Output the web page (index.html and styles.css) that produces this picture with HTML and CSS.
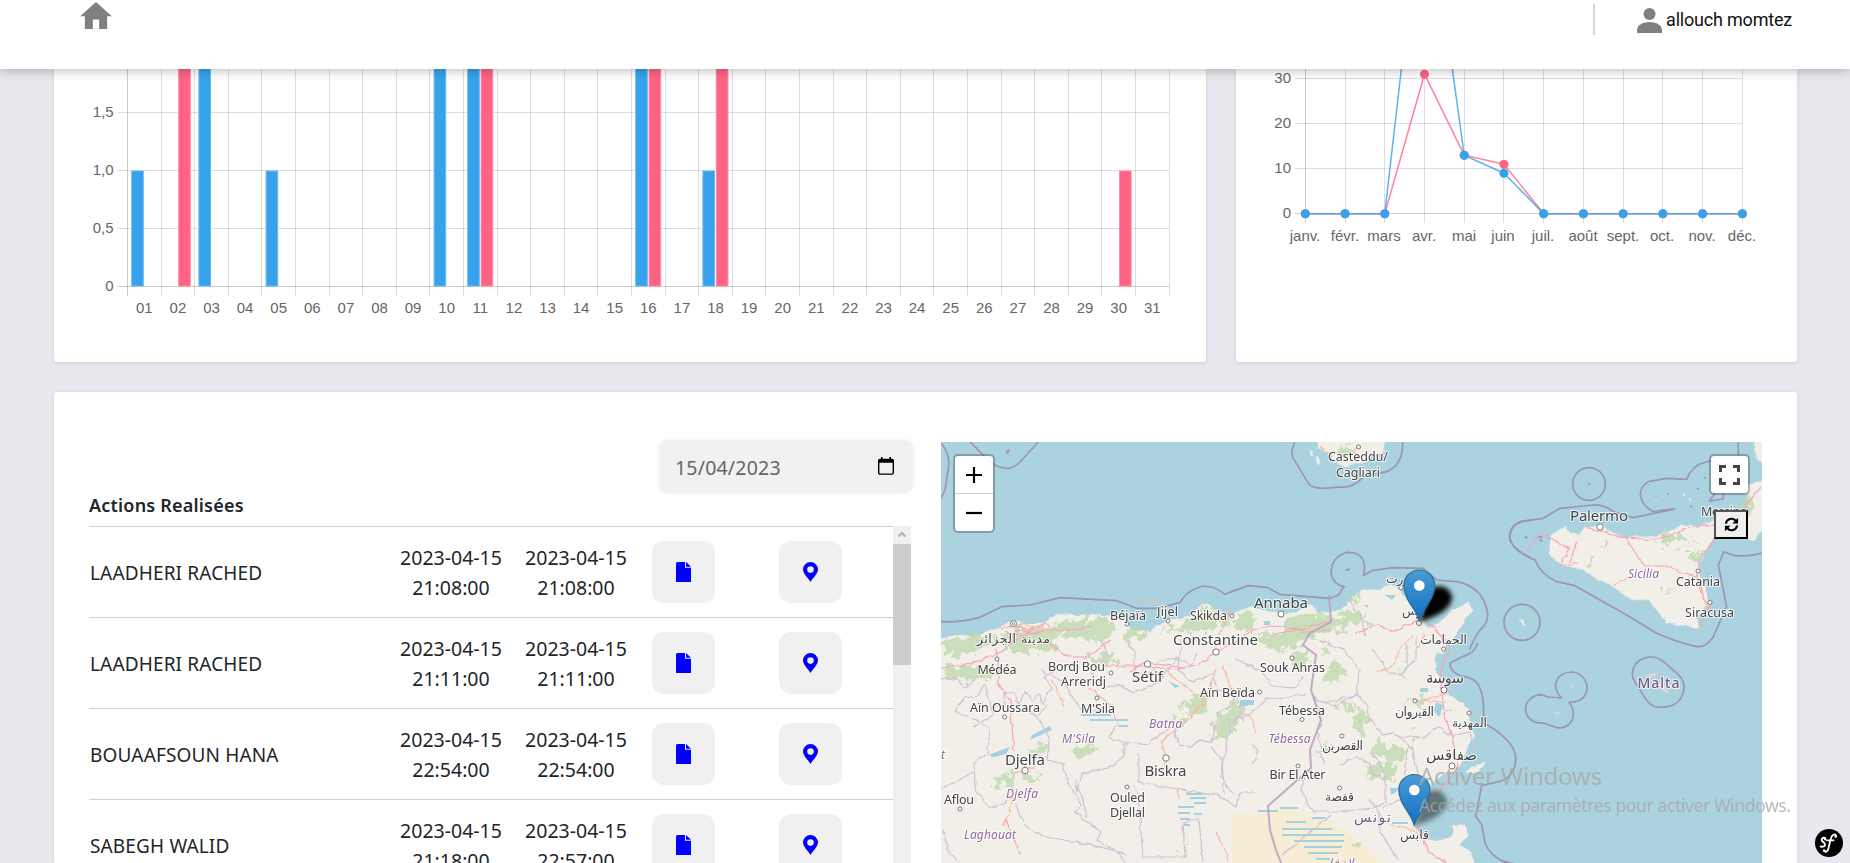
FILE: index.html
```html
<!DOCTYPE html>
<html lang="fr">
<head>
<meta charset="utf-8">
<title>Tableau de bord</title>
<link rel="stylesheet" href="styles.css">
</head>
<body>
<header class="topbar">
  <svg class="home" viewBox="2 3 20 17"><path d="M10 20v-6h4v6h5v-8h3L12 3 2 12h3v8z"/></svg>
  <div class="user">
    <svg class="avatar" viewBox="0 0 25 25"><circle cx="12.500" cy="6" r="6"/><path d="M0 25v-2.500C0 17.500 5 14 12.500 14S25 17.500 25 22.500V25z"/></svg>
    <span>allouch momtez</span>
  </div>
</header>

<main class="page">
  <div class="charts">
    <section class="card"><svg class="chart" id="days" viewBox="54 69 1152 293"></svg></section>
    <section class="card"><svg class="chart" id="months" viewBox="1236 69 561 293"></svg></section>
  </div>

  <section class="card lower">
    <div class="actions">
      <div class="date"><span>15/04/2023</span>
        <svg class="cal" viewBox="0 0 16 18"><path d="M2 2.500h12a1.300 1.300 0 0 1 1.300 1.300v12a1.300 1.300 0 0 1-1.300 1.300H2A1.300 1.300 0 0 1 .7 15.800v-12A1.300 1.300 0 0 1 2 2.500z" fill="none" stroke="#000" stroke-width="1.400"/><path d="M.7 2.500h14.600v3.300H.7zM3 0h1.600v3H3zM11.400 0H13v3h-1.600z"/></svg>
      </div>
      <h2>Actions Realisées</h2>
      <div class="scroller">
        <div class="rows" id="rows"></div>
        <div class="track"><svg class="up" viewBox="0 0 18 18"><path d="M5.500 10.500 9 7l3.500 3.500" fill="none" stroke="#b0b0b0" stroke-width="2"/></svg><div class="thumb"></div></div>
      </div>
    </div>

    <div class="map">
      <svg class="tiles" viewBox="941 442 821 421">
        <defs>
          <filter id="rough" x="-5%" y="-5%" width="110%" height="110%"><feTurbulence type="fractalNoise" baseFrequency=".12" numOctaves="2" seed="4"/><feDisplacementMap in="SourceGraphic" scale="5" xChannelSelector="R" yChannelSelector="G"/></filter>
          <filter id="patchy" x="-5%" y="-5%" width="110%" height="110%"><feTurbulence type="fractalNoise" baseFrequency=".13" numOctaves="3" seed="9"/><feDisplacementMap in="SourceGraphic" scale="22" xChannelSelector="R" yChannelSelector="G"/></filter>
          <filter id="soft" x="-50%" y="-50%" width="200%" height="200%"><feGaussianBlur stdDeviation="2.500"/></filter>
          <linearGradient id="pin" x2="0" y2="1"><stop offset="0" stop-color="#4a9bd2"/><stop offset="1" stop-color="#126fc6"/></linearGradient>
          <g id="marker"><path d="M0 0C-3-12-15.500-22-15.500-35.500a15.500 15.500 0 0 1 31 0C15.500-22 3-12 0 0z" fill="url(#pin)" stroke="#2e6c97" stroke-width="1.200"/><circle cy="-35.500" r="5.300" fill="#fff"/></g>
        </defs>
        <rect class="sea" x="941" y="442" width="821" height="421"/>

        <g class="land" filter="url(#rough)">
          <path transform="translate(930 430) scale(.33333)" d="M15 627 60 622 100 612 140 618 175 605 215 590 240 572 290 580 340 578 380 552 430 555 500 553 560 558 590 575 600 592 625 602 660 605 680 590 700 575 740 565 780 560 800 535 830 515 850 535 880 550 905 560 925 545 970 528V670H15z"/>
          <path transform="translate(1230 430) scale(.33333)" d="M0 570 20 545 60 530 100 540 150 545 195 550 240 525 270 545 300 545 340 535 370 500 400 475 450 480 480 462 510 478 520 495 540 520 570 575 600 590 630 580 640 560 670 540 700 525 715 515 727 540 700 580 680 610 650 640 640 670H0zM265 20 260 55 280 62 300 70 305 95 350 110 390 100 430 80 460 66 466 20zM258 80 270 90 268 102 260 98zM235 60l12 2 2 14-8-2z"/>
          <path transform="translate(1500 430) scale(.33333)" d="M148 345 155 315 195 285 205 305 235 312 255 295 300 285 335 305 375 322 470 318 540 288 570 285 600 290 650 270 640 330 610 370 595 420 605 450 620 490 625 520 590 560 600 600 570 590 500 580 470 540 440 510 390 510 340 470 280 440 250 420 185 405 150 375zM760 20 770 85 800 115V20zM800 145 745 165 740 200 745 250 730 270 740 300 735 325 765 330 800 280zM57 567l12 5 8 15-12-2zM565 203l9 6-4 8zM548 190l9 5-6 5z"/>
          <path d="M925 640h330v240H925z"/>
          <path transform="translate(1230 643) scale(.33333)" d="M0-10H640L620 30 615 80 640 110 650 150 665 165 700 180 715 200 720 250 735 275 720 300 705 335 690 370 660 390 620 405 600 430 570 460 560 500 550 545 590 590 640 590 665 575 670 545 705 545 715 575 690 600 700 610 725 630 735 690H0zM705 390l55-38v20l-22 15z"/>
          <path class="pinkish" transform="translate(1500 643) scale(.33333)" d="M440 92l22 0 5 12-15-2zM470 120l22 5 14 20-15 4zM155 205l22 2-2 7zM210 130h9v5h-9z"/>
        </g>

        <g class="desert"><path d="M1233 812 1263 815 1280 806 1312 816 1345 830 1362 843 1382 863H1233L1231 830z"/></g>

        <g class="green" filter="url(#patchy)">
          <path d="M943 642 980 634 1000 640 975 652 943 655zM943 668l30-4 30 6-20 12-38-4zM1000 636l40-10 22 4-10 20-40 4zM1054 622l45-4 20 10-15 14-40-6zM1088 655l25-2 5 10-25 2zM1125 628l24 2-6 10-18-2zM1200 610l8-6 8 10-10 8zM1160 632l26-10 30-8 15 8-25 8zM1238 612l18 4-4 14-16-2zM1285 622l22-10 30 4 6 12-30 10-28 14zM1332 618l24-10 8 8-18 14zM1350 596l12-3-6 12zM1258 636l30-4 8 10-26 8z"/>
          <path d="M1215 722l20-20 10 8-12 22-20 12zM1180 700l24-2 4 12-18 4zM1168 720l22-4-4 10zM1070 748l26-2-2 8-22 4zM1030 752l14-10 4 6-16 12zM992 780l24-8-4 16-18-3zM1022 772l20 4-14 6zM1320 670l18-6 10 10-20 10zM1358 706l12 14-8 18-10-14zM1412 735l9-3-4 12zM1375 740l30 10-4 12-28-6zM1365 765l30-4-4 20-24-6zM1404 700l24-4-4 10zM1400 665l10 6-8 8zM1290 655l16-6 6 10-18 8zM1330 706l26-4-4 8zM1310 750l22-4-4 6zM1350 845l10-3-2 10zM1180 845l3 12h-4zM1470 860l4-10-6 6z"/>
          <path d="M1660 536l24-2 4 9-24 2zM1686 552l14-4-2 14zM1600 542l8 2-6 5zM1585 560l8-2v6zM1662 590l8-2-4 8zM1640 602l10-2-4 6zM1335 450l14-5 6 10-10 5zM1320 648l10 4-4 6zM1748 490l8 14-8 10-6-12zM1362 625l6-4 2 6z"/>
        </g>

        <g class="lakes">
          <path d="M1032 735l18-9 2 4-22 10zM988 755l22-8-4 7-12 3zM1385 595h11l-4 5zM1363 605h5v3zM1240 700h14v5h-12zM1240 700h8v6h-8zM1436 702l7 3-4 12-5-6zM1390 788h9l-4 5-4 2zM1168 681l12 5-5 2zM1264 621h6v4h-6zM1420 688h8v4h-8z"/>
          <path d="M1081 715h30M1090 720h38M1118 726h10M1082 715h24M1186 794h16M1190 798h16M1194 803h12M1178 807h16M1178 813h12M1194 814h8M1180 819h10M1184 825h6M1258 811h20M1280 808h18M1312 818h14M1286 822h20M1282 829h50M1282 835h62M1294 841h50M1304 847h38M1308 853h30M1316 859h14M1392 823h16" class="stripes"/>
        </g>

        <g class="province" filter="url(#rough)">
          <path d="M941 680l15-2 8 10 12-8M955 710l10-12 12-2 8-12M1004 708V692l10 2 6 10 5-12 8 10 6-8 4 10 8-16-6-10 10-10M1015 700l25 20 9 20-2 20 16 4 6 20 12 20-6 8 26 20-4 8 24 14 6 18M1039 716l8-12M1041 670l22 12 18 28 30 2 8 10-10 16 14 4 0 14M1124 742l25 2 10-10 14-8 5 18 12 4 10-8 12 3 6-30 14-8 4-14M1077 792l5-18 30-8 12-10 2-14M1075 780l8 20 4 18M1139 752l0 30 42 8 36 5 20 12 3-14h16M1224 795l-2-36-12-12M1135 785l4 20 4 52h42l-2-34 16-4 4 44M985 685l8 30-20 12M1017 804c2 40 45 30 110 50M955 710l34 18-2 24-13 12 1 24 14 20 14-4 10-14M941 790l18-10 14-8M943 830l4 18 12 15M1125 640l10 12 0 20 14 2 10-14 18-2 14 8 6-14M1100 640l8 14-16 20 10 14 20-4 10 10 24-10 12-14 10-12"/>
          <path d="M1181 640l-2 30 14 12 20-8 4 16 20 6 4 18-12 10M1235 660l26 10 10 16 24 2 8-12M1234 795l-14-20 12-54 20-8 14-14 40-4M1253 763l5-12-6-8M1315 638l30 12 14 20-2 24-22 12-22-8M1350 600l10 16 6 20M1372 648l18 26 12 0 14-16 0-22M1407 643l0 25M1314 695l8 26-4 12 6 32M1324 703l32-8 12 10 0 10 14 20 12-2 18 16 6 24M1308 770l-7 20 12 22 24 0 36-4 12-5 0-30-14-22M1340 765l16-8 14 8 2 8 14 8M1370 800l10 14 0 18 18 28M1400 740l10-4 14 2 14-12 14 10 18-4 4 18M1404 775l4-30M1383 808l16-8 20 4M1283 855l48-40M1455 650l-6 30 14 6M1452 710l-12 4"/>
        </g>

        <path class="frontier" d="M1329 595 1331 622 1310 633 1303 645 1316 655 1311 690 1321 720 1310 750 1311 768 1286 790 1268 806 1270 830 1276 850 1282 865"/>

        <g class="roads" filter="url(#rough)">
          <path d="M941 668l30-4 30-12 10-10 30-12 30 0 20-4M996 648l2 15 0 20 12 18 4 50M1005 640l14-10 16 4 10-4M1050 643l18 14 20 0 16-12 8-6M1105 666l42 0 30 4 22-6 18-12 14-8 22-14 24-4 30 6 24-2M1130 672l14-10 40 6M1354 633l24-8 16 6 22-10 12 0 10 12 12 12-4 14-6 14 4 40 8 24 6 30-10 16-26 20-8 14 6 14 8 20 24 16 16 20M1006 820l6 14 8 20M1552 538l-8-4-8 4-6 10M1552 538l18 12-10 14 18 0M1577 540l-4 14-4 8M1585 527l42 11 28 2 34-12 50-6M1626 538l10 16 9 12 24 0 10 6 18 4M1715 540l-14 16-4 18 4 20 8 14-10 22M1742 510l20-24M1328 622l-30 8-25 4M1000 629l16-4 12 5 16-6 14 6M1004 632l20 4 10-8"/>
          <path class="minor" d="M1014 788l-4 24-8 14M1010 773l26-6M1132 600l30 2M1052 680l12 26M1090 688l14 12 8 6M1165 670l30 24 12 4-10 14-14 12-22 18 4 10 0 16-14 8M1216 668l-6 20-20 30M1223 665l10 30M1178 790l2 8M1216 832l12 24 2 20M1376 673l18-8 8-20 10-8M1390 825l25 6 6 6M1420 620l6-8 10-6M1418 648l6-14M1614 585l14-8M1320 447l12 10M1358 444l-6 10M1232 608l-6 14-8 12M1230 692l22 4M1238 712l12 4 6 16M1425 700l28-8M1415 700l32 2M1700 588l6 20M1018 628l6-5 6 5 8-2"/>
        </g>

        <g class="waters">
          <g transform="translate(930 430) scale(.33333)"><path d="M33 575Q90 578 150 562L215 530 300 525 390 503 560 512 620 535 680 535 750 518Q770 480 820 468 860 470 884 493L945 470 960 467M33 40Q60 70 56 110L45 180 33 205M120 36C160 70 180 112 230 115 260 115 270 95 325 36M228 62l5 8 3-12"/></g>
          <g transform="translate(1230 430) scale(.33333)"><path d="M0 487 55 467 110 472 150 493 300 505 325 495 342 470C290 460 290 390 345 368 400 362 410 400 400 437L425 422 490 413 580 415 620 450 680 455Q760 470 773 550 775 580 750 600 735 620 718 660M195 36Q180 65 190 85L235 160Q245 175 275 175L355 170Q385 160 400 140L470 125Q520 105 518 36M346 420l10 0 0-5M900 271Q840 275 838 320 842 355 900 382M884 320l6 4"/></g>
          <g transform="translate(1500 430) scale(.33333)"><path d="M526 237 400 263 340 245Q310 222 280 225L180 235 130 265 60 275Q28 290 30 325 40 365 105 390 120 430 170 455L225 467 300 510 380 555 470 610Q540 640 590 650 620 652 640 620L680 530 655 405 672 365 705 377Q760 380 790 367M526 237Q480 240 460 245C420 225 405 180 445 155L500 145 560 148Q580 95 640 93M715 36V75M645 190 628 213 670 207V190M74 320l8 4M115 320l12 2M118 330l10 3M264 163l7-2M466 199l4-1M502 191l5 2M590 178l7-3M612 143l4 1M571 226l4 7"/><circle cx="267" cy="162" r="49"/><circle cx="66" cy="577" r="54"/></g>
          <g transform="translate(1230 643) scale(.33333)"><path d="M743 0Q735 30 700 40L660 60Q660 90 700 100C740 105 755 130 760 180L762 240Q850 290 857 340 860 400 810 415L755 428 737 520 755 545 765 600Q780 640 830 660"/></g>
          <g transform="translate(1500 643) scale(.33333)"><path d="M185 165C150 130 170 88 215 87 275 92 280 180 207 178 235 215 215 255 173 255L130 240C65 245 55 160 125 155L145 162zM397 95C400 40 460 30 490 55L535 95C570 130 545 185 505 190 460 200 450 185 435 165L410 125C400 110 397 105 397 95zM0 652l40 10"/></g>
        </g>

        <g class="towns">
          <circle cx="1013.500" cy="623.500" r="3"/><circle cx="1013.500" cy="623.500" r="1"/><circle cx="1127" cy="624" r="2"/><circle cx="1168" cy="621" r="2"/><circle cx="1232" cy="616" r="2"/><circle cx="1281" cy="614" r="3"/><circle cx="997" cy="659" r="2"/><circle cx="1111" cy="673" r="2"/><circle cx="1147.500" cy="664" r="3.200"/><circle cx="1216" cy="652" r="3.200"/><circle cx="1097" cy="698" r="2"/><circle cx="1004.500" cy="717" r="2"/><circle cx="1025" cy="770.500" r="3.200"/><circle cx="1166" cy="758" r="3.200"/><circle cx="1127" cy="787" r="2"/><circle cx="960" cy="809" r="2"/><circle cx="1292" cy="658" r="2"/><circle cx="1259.500" cy="692" r="2"/><circle cx="1302" cy="719.500" r="2"/><circle cx="1342" cy="736" r="2"/><circle cx="1298" cy="766" r="2"/><circle cx="1339.500" cy="788" r="2"/><circle cx="1415" cy="701" r="2"/><circle cx="1444" cy="690" r="3"/><circle cx="1469" cy="713" r="2"/><circle cx="1452" cy="766" r="3"/><circle cx="1443.500" cy="649" r="2"/><circle cx="1358.500" cy="447" r="2"/><circle cx="1600" cy="527" r="3.200"/><circle cx="1698" cy="571" r="2"/><circle cx="1710" cy="602.500" r="2"/><circle cx="1419" cy="623" r="2.500"/><circle cx="1401" cy="588" r="2"/>
        </g>

        <g class="names">
          <text x="1110" y="620" textLength="36">Béjaïa</text><text x="1157" y="616" textLength="21">Jijel</text><text x="1190" y="620" textLength="37">Skikda</text>
          <text x="977" y="642.500" textLength="73" class="ar">مدينة الجزائر</text>
          <text x="977.500" y="674" textLength="39">Médéa</text><text x="1048" y="671" textLength="57">Bordj Bou</text><text x="1061" y="686" textLength="45">Arreridj</text>
          <text x="970" y="712" textLength="70">Aïn Oussara</text><text x="1081" y="713" textLength="34">M'Sila</text><text x="1200" y="697" textLength="55">Aïn Beïda</text>
          <text x="944" y="804" textLength="30">Aflou</text><text x="1110" y="802" textLength="35">Ouled</text><text x="1110" y="817" textLength="35">Djellal</text>
          <text x="1260" y="672" textLength="65">Souk Ahras</text><text x="1279" y="714.500" textLength="46">Tébessa</text><text x="1269.500" y="779" textLength="56">Bir El Ater</text>
          <text x="1328" y="461" textLength="60">Casteddu/</text><text x="1336" y="476.500" textLength="44">Cagliari</text>
          <text x="1701" y="516" textLength="46">Messina</text><text x="1676" y="586" textLength="44">Catania</text><text x="1685" y="617" textLength="49">Siracusa</text>
          <g class="ar"><text x="1386" y="583" textLength="30">بنزرت</text><text x="1402" y="615" textLength="22">تونس</text><text x="1420" y="644" textLength="47">الحمامات</text><text x="1395" y="716" textLength="39">القيروان</text><text x="1452" y="726.500" textLength="35">المهدية</text><text x="1322" y="750" textLength="41">القصرين</text><text x="1325" y="801" textLength="29">قفصة</text><text x="1400" y="839" textLength="29">قابس</text></g>
        </g>
        <g class="names big">
          <text x="1173" y="645" textLength="85">Constantine</text><text x="1254" y="608" textLength="54">Annaba</text><text x="1132" y="682" textLength="31">Sétif</text><text x="1005" y="765" textLength="40">Djelfa</text><text x="1144.500" y="775.500" textLength="42">Biskra</text><text x="1570" y="521" textLength="58">Palermo</text>
          <g class="ar"><text x="1426" y="683" textLength="38">سوسة</text><text x="1426" y="760" textLength="51">صفاقس</text></g>
        </g>
        <g class="names region">
          <text x="1062" y="743" textLength="33">M'Sila</text><text x="1149" y="728" textLength="33">Batna</text><text x="1006" y="798" textLength="32">Djelfa</text><text x="964" y="838.500" textLength="52">Laghouat</text><text x="1268.500" y="743" textLength="42">Tébessa</text><text x="1628" y="578" textLength="31">Sicilia</text><text x="941" y="759">t</text><text x="1320" y="867" class="ar" textLength="38">ولاية قبلي</text>
        </g>
        <g class="names country"><text x="1637.500" y="688" textLength="42">Malta</text><text class="ar" x="1354" y="822" textLength="37">تونس</text></g>

        <g class="shade"><path filter="url(#soft)" d="M1419 622l12-34q16-6 21 8 1 16-33 26z"/><path filter="url(#soft)" opacity=".45" d="M1414 826l12-34q16-6 21 8 1 16-33 26z"/></g>
        <use href="#marker" x="1419.300" y="621"/><use href="#marker" x="1414.300" y="825.500"/>
      </svg>
      <div class="zoom"><div><svg viewBox="0 0 16 16"><path d="M0 8h16M8 0v16"/></svg></div><div><svg viewBox="0 0 16 16"><path d="M0 8h16"/></svg></div></div>
      <div class="full"><svg viewBox="0 0 21 20"><path d="M1.500 7V1.500H7M14 1.500h5.500V7M19.500 13v5.500H14M7 18.500H1.500V13" fill="none" stroke="#444" stroke-width="3"/></svg></div>
      <div class="reload"><svg viewBox="0 0 16 16"><path d="M2 7a6 6 0 0 1 10.500-3M14 9a6 6 0 0 1-10.500 3" fill="none" stroke="#000" stroke-width="2.200"/><path d="M15 .8v6H9zM1 15.200v-6h6z"/></svg></div>
    </div>
  </section>
</main>

<svg class="notice" viewBox="0 0 376 60"><text class="n1" x="0" y="25" textLength="183">Activer Windows</text><text class="n2" x="0" y="52" textLength="372">Accédez aux paramètres pour activer Windows.</text></svg>
<svg class="badge" viewBox="0 0 28 28"><circle cx="14" cy="14" r="14"/><path d="M10.700 9.700C9.500 8 6.300 9 6.700 11.200c.3 1.700 3.400 2.300 3.300 4.400-.1 2.200-3.500 2.900-4.800 1.200" fill="none" stroke="#fff" stroke-width="1.900"/><path d="M8.800 21.600c1.500 2 3.800 1.300 4.700-2.300 1-4 1.500-8 3-11.500 1.100-2.600 4-3 4.500-1.200M12 11.400h6.500" fill="none" stroke="#fff" stroke-width="1.800" stroke-linecap="round"/><circle cx="9.200" cy="21.400" r="1.200" fill="#fff"/><circle cx="20.800" cy="7.500" r="1.300" fill="#fff"/><circle cx="10.200" cy="10.200" r="1.200" fill="#fff"/></svg>
<script src="app.js"></script>
</body>
</html>
```
FILE: styles.css
```css
* { box-sizing: border-box; }
body { margin: 0; height: 863px; overflow: hidden; background: #e8e9ee; font-family: "Noto Sans", "Open Sans", sans-serif; color: #212529; }
svg { display: block; }
.topbar { position: relative; z-index: 2; height: 69px; background: #fff; display: flex; justify-content: space-between; align-items: flex-start; padding: 0 58px 0 80px; box-shadow: 0 2px 10px rgba(0, 0, 0, .25); }
.home { width: 32px; height: 27px; margin-top: 2px; fill: #808080; }
.user { display: flex; align-items: center; gap: 4px; height: 31px; margin-top: 4px; padding-left: 42px; border-left: 2px solid #d5d5dd; font-family: Roboto, sans-serif; font-size: 18px; letter-spacing: -.2px; color: #111; white-space: nowrap; }
.avatar { width: 25px; height: 25px; margin-top: 2px; fill: #808080; }
.page { padding: 0 53px 0 54px; }
.charts { display: grid; grid-template-columns: 1152px 561px; gap: 30px; height: 293px; }
.card { background: #fff; border-radius: 0 0 3px 3px; box-shadow: 0 1px 4px rgba(0, 0, 0, .12); }
.chart { width: 100%; height: 293px; font-family: "Liberation Sans", Arial, sans-serif; font-size: 15px; }
.chart text { fill: #666; }
.grid { stroke: #000; stroke-opacity: .13; }
.axis { stroke: #000; stroke-opacity: .2; }
.bar-a { fill: #36a2eb; stroke: #69b9ef; }
.bar-b { fill: #ff6384; stroke: #ff8ba3; }
.line { fill: none; stroke-width: 1.5; stroke-opacity: .8; }
.lower { margin-top: 30px; height: 471px; border-radius: 3px 3px 0 0; padding: 49px 35px 0 35px; display: flex; gap: 29px; }
.actions { width: 823px; display: flex; flex-direction: column; }
.date { align-self: flex-end; width: 252px; height: 51px; border-radius: 8px; background: #f1f1f1; box-shadow: 0 0 5px rgba(0, 0, 0, .12); display: flex; align-items: center; justify-content: space-between; padding: 2px 18px 0 15px; font-size: 19.5px; letter-spacing: .2px; color: #666; }
.cal { width: 16px; height: 18px; margin-top: -3px; }
h2 { margin: 0; height: 34px; font-size: 18px; line-height: 27px; font-weight: 600; letter-spacing: .2px; }
.scroller { display: flex; height: 337px; overflow: hidden; }
.rows { width: 804px; }
.row { display: grid; grid-template-columns: 292px 140px 110px 127px 135px; height: 91px; border-top: 1px solid #d0d0d0; font-size: 19.5px; line-height: 30px; align-items: center; text-align: center; }
.row .who { text-align: left; padding: 2px 0 0 1px; font-size: 19px; letter-spacing: .15px; white-space: nowrap; }
.row .when { padding-top: 2px; }
.cell-btn { display: flex; padding-left: 21px; }
.btn { width: 63px; height: 62px; border-radius: 12px; background: #f0f0f0; display: flex; align-items: center; justify-content: center; }
.btn svg { width: 15px; height: 20px; fill: #00f; }
.track { width: 18px; background: #f0f0f0; }
.up { width: 18px; height: 18px; }
.thumb { height: 121px; background: #cdcdcd; }
.map { position: relative; width: 821px; height: 421px; margin-top: 1px; }
.tiles { width: 821px; height: 421px; }
.sea { fill: #aad3df; }
.land { fill: #f2efe9; }
.pinkish { fill: #eed3d8; }
.desert { fill: #f6edd4; }
.green { fill: #bcd8ab; opacity: .75; }
.lakes { fill: #a5d0df; }
.stripes { stroke: #a5d0df; stroke-width: 1.8; }
.province { fill: none; stroke: #cfc0d2; stroke-width: 1.2; }
.frontier { fill: none; stroke: #b79fbc; stroke-width: 2; opacity: .85; }
.roads { fill: none; stroke: #f8a2b4; stroke-width: 1.2; }
.minor { stroke: #fab59f; stroke-width: 1.1; }
.waters { fill: none; stroke: #9c95b4; stroke-width: 5; stroke-linejoin: round; }
.towns { fill: #fff; stroke: #777; stroke-width: 1; }
.names { font-size: 12.5px; fill: #444; stroke: #fff; stroke-opacity: .75; stroke-width: 2.2px; paint-order: stroke; stroke-linejoin: round; }
.names.big { font-size: 15px; }
.names.region { font-style: italic; fill: #8d6b9b; font-size: 12px; }
.names.country { font-size: 14px; fill: #76587e; font-weight: 500; }
.ar { font-family: "DejaVu Sans", sans-serif; }
.shade { fill: #000; }
.zoom { position: absolute; left: 12px; top: 12px; width: 42px; height: 79px; border: 2px solid rgba(0, 0, 0, .25); border-radius: 5px; background: #fff; background-clip: padding-box; }
.zoom div { height: 38px; display: grid; place-items: center; }
.zoom div:first-child { border-bottom: 1px solid #ccc; }
.zoom svg { width: 16px; height: 16px; stroke: #000; stroke-width: 2.2; }
.full { position: absolute; left: 768px; top: 12px; width: 41px; height: 41px; border: 2px solid rgba(0, 0, 0, .25); border-radius: 5px; background: #fff; background-clip: padding-box; display: grid; place-items: center; }
.full svg { width: 21px; height: 20px; }
.reload { position: absolute; left: 773px; top: 68px; width: 34px; height: 29px; border: 2px solid #000; border-top-color: #555; border-left-color: #555; background: #efefef; display: grid; place-items: center; }
.reload svg { width: 15px; height: 15px; }
.notice { position: absolute; left: 1419px; top: 760px; width: 376px; height: 60px; z-index: 3; fill: #a8a8a8; opacity: .8; }
.n1 { font-size: 24px; }
.n2 { font-size: 17.5px; }
.badge { position: absolute; left: 1815px; top: 829px; width: 28px; height: 28px; }
```
FILE: app.js
```js
const line = (x1, y1, x2, y2, cls) => `<path class="${cls}" d="M${x1} ${y1}L${x2} ${y2}"/>`;
const label = (x, y, t, anchor) => `<text x="${x}" y="${y}" text-anchor="${anchor}">${t}</text>`;

// Daily bar chart
let out = '';
const x0 = 127.5, step = 33.6;
['0', '0,5', '1,0', '1,5'].forEach((t, i) => {
  const y = 286.5 - 58 * i;
  out += line(117.5, y, 1169, y, i ? 'grid' : 'axis') + label(113.5, y + 4, t, 'end');
});
for (let i = 0; i <= 31; i++) {
  const x = Math.floor(x0 + i * step) + .5;
  out += line(x, 60, x, 296, i ? 'grid' : 'axis');
  if (i < 31) out += label(x0 + step * (i + .5), 312.5, String(i + 1).padStart(2, '0'), 'middle');
}
const bar = (day, high, second) => {
  const x = x0 + (day - 1) * step + (second ? 17.6 : 4.2);
  const y = high ? 60 : 171;
  out += `<rect class="${second ? 'bar-b' : 'bar-a'}" x="${x}" y="${y}" width="11.600" height="${286 - y}"/>`;
};
[[1, 0], [3, 1], [5, 0], [10, 1], [11, 1], [16, 1], [18, 0]].forEach(([d, h]) => bar(d, h, false));
[[2, 1], [11, 1], [16, 1], [18, 1], [30, 0]].forEach(([d, h]) => bar(d, h, true));
document.getElementById('days').innerHTML = out;

// Monthly line chart
out = '';
const mx = i => 1305.3 + i * 39.73, my = v => 213.7 - v * 4.5;
[0, 10, 20, 30].forEach(v => {
  const y = Math.floor(my(v)) + .5;
  out += line(1295, y, 1742, y, v ? 'grid' : 'axis') + label(1291, y + 4, v, 'end');
});
['janv.', 'févr.', 'mars', 'avr.', 'mai', 'juin', 'juil.', 'août', 'sept.', 'oct.', 'nov.', 'déc.'].forEach((m, i) => {
  const x = Math.floor(mx(i)) + .5;
  out += line(x, 60, x, 223, i ? 'grid' : 'axis') + label(x - .5, 241, m, 'middle');
});
const series = (vals, color) => {
  out += `<polyline class="line" stroke="${color}" points="${vals.map((v, i) => mx(i) + ',' + my(v)).join(' ')}"/>`;
  vals.forEach((v, i) => { out += `<circle cx="${mx(i)}" cy="${my(v)}" r="4.500" fill="${color}"/>`; });
};
series([0, 0, 0, 31, 13, 11, 0, 0, 0, 0, 0, 0], '#ff6384');
series([0, 0, 0, 77, 13, 9, 0, 0, 0, 0, 0, 0], '#36a2eb');
document.getElementById('months').innerHTML = out;

// Actions table
const file = '<svg viewBox="0 0 15 20"><path d="M0 1.500Q0 0 1.500 0H9v5.800h6V20H0zM10 0l5 4.800h-5z"/></svg>';
const pin = '<svg viewBox="0 0 15 20"><path fill-rule="evenodd" d="M7.500 20C6 17 0 11.500 0 7.500a7.500 7.500 0 0 1 15 0C15 11.500 9 17 7.500 20zM7.500 4.300a3.300 3.300 0 1 0 0 6.600 3.300 3.300 0 0 0 0-6.600z"/></svg>';
document.getElementById('rows').innerHTML = [
  ['LAADHERI RACHED', '21:08:00', '21:08:00'],
  ['LAADHERI RACHED', '21:11:00', '21:11:00'],
  ['BOUAAFSOUN HANA', '22:54:00', '22:54:00'],
  ['SABEGH WALID', '21:18:00', '22:57:00']
].map(([n, a, b]) => `<div class="row"><div class="who">${n}</div><div class="when">2023-04-15<br>${a}</div><div class="when">2023-04-15<br>${b}</div><div class="cell-btn"><div class="btn">${file}</div></div><div class="cell-btn"><div class="btn">${pin}</div></div></div>`).join('');
```
